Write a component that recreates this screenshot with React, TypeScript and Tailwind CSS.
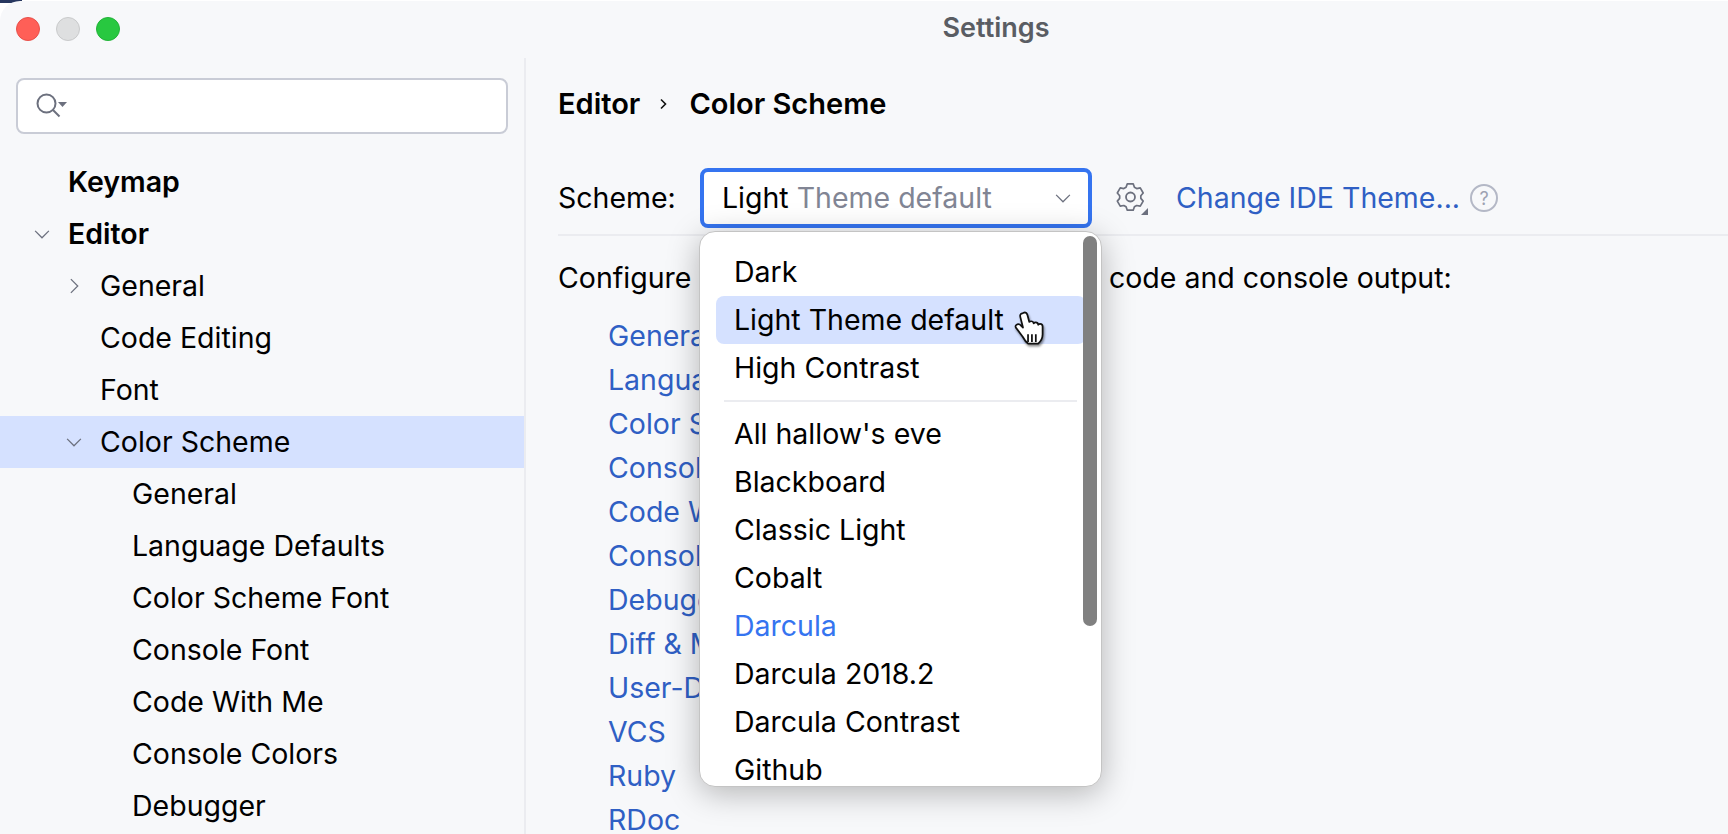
const font = { fontFamily: "Inter, 'Noto Sans', sans-serif" };

const treeRows = [
  { label: "Keymap", indent: "pl-[68px]", bold: true },
  { label: "Editor", indent: "pl-[68px]", bold: true, arrow: "down" },
  { label: "General", indent: "pl-[100px]", arrow: "right" },
  { label: "Code Editing", indent: "pl-[100px]" },
  { label: "Font", indent: "pl-[100px]" },
  { label: "Color Scheme", indent: "pl-[100px]", arrow: "down", selected: true },
  { label: "General", indent: "pl-[132px]" },
  { label: "Language Defaults", indent: "pl-[132px]" },
  { label: "Color Scheme Font", indent: "pl-[132px]" },
  { label: "Console Font", indent: "pl-[132px]" },
  { label: "Code With Me", indent: "pl-[132px]" },
  { label: "Console Colors", indent: "pl-[132px]" },
  { label: "Debugger", indent: "pl-[132px]" },
];

const links = [
  "General",
  "Language Defaults",
  "Color Scheme Font",
  "Console Font",
  "Code With Me",
  "Console Colors",
  "Debugger",
  "Diff & Merge",
  "User-Defined",
  "VCS",
  "Ruby",
  "RDoc",
];

const schemes = ["All hallow's eve", "Blackboard", "Classic Light", "Cobalt", "Darcula", "Darcula 2018.2", "Darcula Contrast", "Github"];

const Chevron = ({ dir, className }: { dir: "down" | "right"; className: string }) => (
  <svg viewBox="0 0 16 16" className={className} fill="none" stroke="#6c707e" strokeWidth="1">
    {dir === "down" ? <path d="M2.5 5.5 8 11l5.5-5.5" /> : <path d="M5.5 2.5 11 8l-5.5 5.5" />}
  </svg>
);

const SearchIcon = () => (
  <svg width="34" height="28" viewBox="0 0 34 28" fill="none">
    <circle cx="11.5" cy="11.5" r="9" stroke="#6c707e" strokeWidth="2" />
    <path d="M18 18l6.5 6.5" stroke="#6c707e" strokeWidth="2" />
    <path d="M23 10h9l-4.5 5z" fill="#6c707e" />
  </svg>
);

const GearIcon = () => (
  <svg width="36" height="36" viewBox="0 0 36 36" fill="none">
    <path
      d="M13.6 5.2h6.3l1.3 3.6 2.4 1.4 3.800-.7 3.100 5.400-2.500 2.900v2.800l2.500 2.900-3.100 5.400-3.800-.7-2.400 1.400-1.300 3.600h-6.300l-1.300-3.600-2.400-1.400-3.800.7-3.100-5.400 2.500-2.900v-2.800l-2.500-2.900 3.100-5.400 3.800.7 2.400-1.400z"
      transform="translate(1.500 -1) scale(.94)"
      stroke="#6c707e"
      strokeWidth="1.800"
      strokeLinejoin="round"
    />
    <circle cx="17.500" cy="17" r="4.500" stroke="#6c707e" strokeWidth="1.800" />
    <path d="M35 28v7h-7z" fill="#6c707e" />
  </svg>
);

const HandCursor = () => (
  <svg width="33" height="37" viewBox="0 0 34 38" className="absolute left-[297px] top-[15px] drop-shadow-[1px_2px_1px_rgba(0,0,0,0.45)]">
    <path
      d="M9.500 2.500c-1.800.3-2.500 1.800-2 3.500l2.800 11-1.800-1.800c-1.500-1.700-3.500-2.100-5-1-1.400 1-1.100 2.400 0 3.600l6.500 8.700c1.500 2.800 3.300 5.500 5.500 7h10.500c2.800-2.300 4.500-5.500 4.500-9.500v-8c0-1.600-1-2.800-2.500-2.800-.9 0-1.500.3-2 .9-.2-1.500-1.200-2.400-2.600-2.400-.9 0-1.600.4-2.100 1-.3-1.400-1.300-2.200-2.600-2.200-.8 0-1.400.2-1.900.7l-2-7.300c-.5-1.600-1.500-2.600-3.300-2.400z"
      fill="#fff"
      stroke="#111"
      strokeWidth="1.800"
      strokeLinejoin="round"
    />
    <path d="M15.500 24v8M19.500 24v8M23.500 24v8" stroke="#111" strokeWidth="1.800" />
  </svg>
);

export default function App() {
  return (
    <div className="relative h-[834px] w-[1728px] overflow-hidden bg-white">
      <div className="absolute left-0 top-0 h-[3px] w-[22px] bg-[#27375f]" />
      <div style={font} className="relative mt-px h-[833px] rounded-tl-[20px] bg-[#f7f8fa] text-[28.5px] text-black flex flex-col">
        <header className="h-[57px] shrink-0 relative flex items-center pl-4 gap-4 pb-[2px]">
          <span className="size-6 rounded-full bg-[#ff5f57] border border-[#e8504a]" />
          <span className="size-6 rounded-full bg-[#dedfe0] border border-[#c9cacb]" />
          <span className="size-6 rounded-full bg-[#28c840] border border-[#22b338]" />
          <span className="ml-[800px] text-[27px] font-semibold text-[#5a5d63] w-[120px] text-center">Settings</span>
        </header>
        <div className="flex flex-1 min-h-0">
          <aside className="w-[526px] shrink-0 border-r-2 border-[#ebecf0]">
            <div className="ml-4 mt-5 h-[56px] w-[492px] rounded-lg border-2 border-[#c9ccd6] bg-white flex items-center pl-[17px]">
              <SearchIcon />
            </div>
            <nav className="mt-[22px]">
              {treeRows.map((row, i) => (
                <div
                  key={i}
                  className={`relative h-[52px] flex items-center ${row.indent} ${row.selected ? "bg-[#d5e1ff]" : ""} ${row.bold ? "font-semibold" : ""}`}
                >
                  {row.arrow === "down" && (
                    <Chevron dir="down" className={`absolute size-5 ${row.bold ? "left-8" : "left-16"}`} />
                  )}
                  {row.arrow === "right" && <Chevron dir="right" className="absolute size-5 left-16" />}
                  {row.label}
                </div>
              ))}
            </nav>
          </aside>
          <main className="flex-1 pl-[32px] min-w-0">
            <div className="h-[46px] mt-[23px] flex items-center font-semibold text-[29px]">
              Editor
              <svg width="12" height="14" viewBox="0 0 12 14" fill="none" className="ml-[18px] mr-[19px]">
                <path d="M3 2.500 7.500 7 3 11.500" stroke="#111" strokeWidth="1.600" />
              </svg>
              Color Scheme
            </div>
            <div className="relative mt-[41px] h-[60px] flex items-center">
              <span>Scheme:</span>
              <div className="absolute left-[142px] top-0 w-[392px] h-[60px] rounded-lg border-[4px] border-[#3574f0] bg-white flex items-center pl-[18px] pr-[15px]">
                Light<span className="ml-2 text-[#818594]">Theme default</span>
                <Chevron dir="down" className="ml-auto size-5" />
              </div>
              <div className="absolute left-[555px] top-[12px]">
                <GearIcon />
              </div>
              <span className="absolute left-[618px] text-[#2f5fc4]">Change IDE Theme...</span>
              <span className="absolute left-[912px] size-[28px] rounded-full border-2 border-[#b4b8c6] text-[18px] text-[#9da2b2] flex items-center justify-center">?</span>
              <div className="absolute left-[141px] top-[63px] w-[403px] h-[556px] z-10 rounded-2xl bg-white border border-[#c4c4c4] shadow-[0_6px_32px_rgba(0,0,0,0.28)] overflow-hidden">
                <div className="pt-4">
                  <div className="h-[48px] flex items-center pl-[34px]">Dark</div>
                  <div className="relative h-[48px] ml-4 mr-[15px] rounded-lg bg-[#d5e1ff] flex items-center pl-[18px]">
                    Light Theme default
                    <HandCursor />
                  </div>
                  <div className="h-[48px] flex items-center pl-[34px]">High Contrast</div>
                  <div className="mx-6 my-[8px] border-t-2 border-[#ebecf0]" />
                  {schemes.map((name) => (
                    <div key={name} className={`h-[48px] flex items-center pl-[34px] ${name === "Darcula" ? "text-[#3574f0]" : ""}`}>
                      {name}
                    </div>
                  ))}
                </div>
                <div className="absolute right-[4px] top-[4px] w-[14px] h-[390px] rounded-full bg-[#808080]" />
              </div>
            </div>
            <div className="mt-[6px] border-t-2 border-[#ebecf0]" />
            <div className="mt-[22px] h-[40px] flex items-center">
              <span className="w-[551px] overflow-hidden whitespace-nowrap">Configure color settings for</span>
              <span>code and console output:</span>
            </div>
            <ul className="mt-[16px] pl-[50px] text-[#2f5fc4]">
              {links.map((link) => (
                <li key={link} className="h-[44px] flex items-center">{link}</li>
              ))}
            </ul>
          </main>
        </div>
      </div>
    </div>
  );
}
